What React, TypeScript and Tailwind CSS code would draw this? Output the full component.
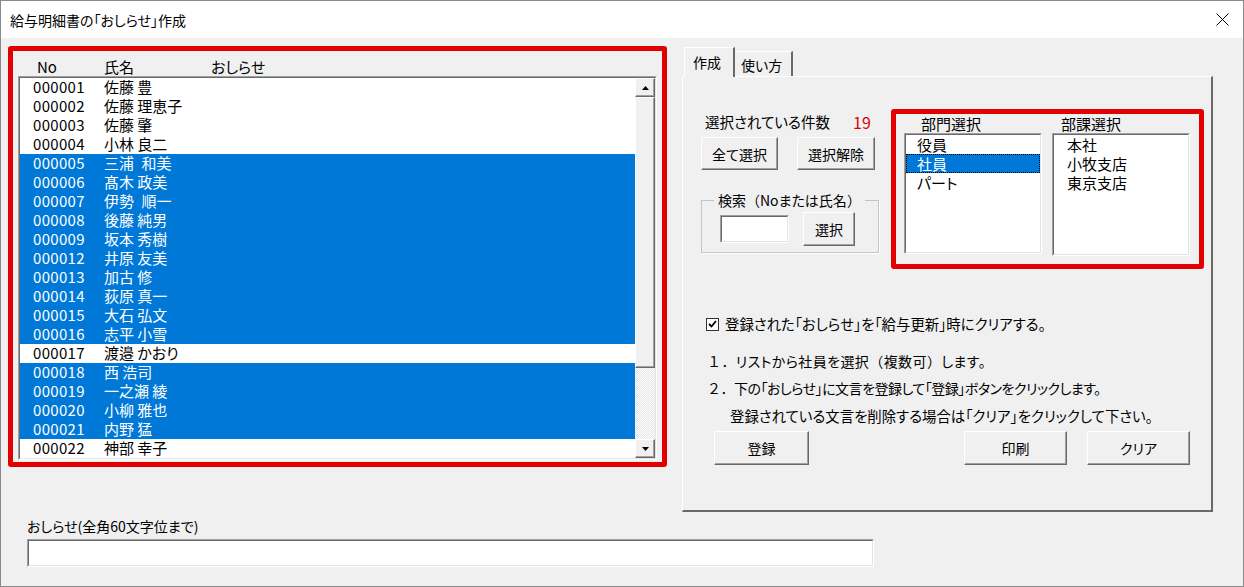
import React from 'react';

type Row = { no: string; name: string; sel: boolean };

const rows: Row[] = [
  { no: '000001', name: '佐藤 豊', sel: false },
  { no: '000002', name: '佐藤 理恵子', sel: false },
  { no: '000003', name: '佐藤 肇', sel: false },
  { no: '000004', name: '小林 良二', sel: false },
  { no: '000005', name: '三浦\u2002和美', sel: true },
  { no: '000006', name: '髙木 政美', sel: true },
  { no: '000007', name: '伊勢\u2002順一', sel: true },
  { no: '000008', name: '後藤 純男', sel: true },
  { no: '000009', name: '坂本 秀樹', sel: true },
  { no: '000012', name: '井原 友美', sel: true },
  { no: '000013', name: '加古 修', sel: true },
  { no: '000014', name: '荻原 真一', sel: true },
  { no: '000015', name: '大石 弘文', sel: true },
  { no: '000016', name: '志平 小雪', sel: true },
  { no: '000017', name: '渡邉 かおり', sel: false },
  { no: '000018', name: '西 浩司', sel: true },
  { no: '000019', name: '一之瀬 綾', sel: true },
  { no: '000020', name: '小柳 雅也', sel: true },
  { no: '000021', name: '内野 猛', sel: true },
  { no: '000022', name: '神部 幸子', sel: false },
];

// full-width glyphs that should keep their full advance
const F = ({ children }: { children: React.ReactNode }) => (
  <span className="[font-feature-settings:normal]">{children}</span>
);

// classic sunken frame (listbox / textbox)
const Sunken = ({ className, children }: { className?: string; children?: React.ReactNode }) => (
  <div className={'border border-[#a0a0a0] border-b-white border-r-white ' + (className ?? '')}>
    <div className="w-full h-full border border-[#696969] border-b-[#e3e3e3] border-r-[#e3e3e3] bg-white overflow-hidden">
      {children}
    </div>
  </div>
);

const Btn = ({ label, className }: { label: string; className?: string }) => (
  <button
    className={
      'bg-[#f0f0f0] border border-white border-r-[#696969] border-b-[#696969] shadow-[inset_-1px_-1px_#a0a0a0] text-[14px] flex items-center justify-center ' +
      (className ?? '')
    }
  >
    {label}
  </button>
);

const Arrow = ({ down }: { down?: boolean }) => (
  <div className="h-[19px] bg-[#f0f0f0] border border-white border-r-[#696969] border-b-[#696969] shadow-[inset_-1px_-1px_#a0a0a0] flex items-center justify-center">
    <svg width="7" height="4" viewBox="0 0 7 4">
      <path d={down ? 'M0 0H7L3.5 4Z' : 'M0 4H7L3.5 0Z'} fill="#000" />
    </svg>
  </div>
);

export default function App() {
  return (
    <div className="w-[1244px] h-[587px] border border-[#8a8a8a] bg-[#f0f0f0] flex flex-col text-black overflow-hidden font-['Noto_Sans_CJK_JP','Noto_Sans',sans-serif] [font-feature-settings:'palt']">
      {/* title bar */}
      <div className="h-[37px] shrink-0 bg-white flex items-center justify-between pl-[9px] pr-[14px]">
        <span className="text-[14px] leading-[20px]">給与明細書の「おしらせ」作成</span>
        <svg width="13" height="13" viewBox="0 0 13 13">
          <path d="M0.5 0.5L12.5 12.5M12.5 0.5L0.5 12.5" stroke="#000" strokeWidth="1" />
        </svg>
      </div>

      <div className="flex-1 flex flex-col pl-[7px]">
        <div className="flex items-start pt-[8px]">
          {/* employee list */}
          <div className="w-[659px] h-[421px] border-[5px] border-[#e00000] rounded-[3px] flex flex-col">
            <div className="h-[25px] flex items-end pl-[24px] text-[15px] leading-[18px]">
              <span className="w-[67px]">No</span>
              <span className="w-[107px]">氏名</span>
              <span>おしらせ</span>
            </div>
            <Sunken className="mx-[5px] h-[384px]">
              <div className="flex h-full">
                <div className="flex-1 flex flex-col">
                  {rows.map((r) => (
                    <div
                      key={r.no}
                      className={
                        'h-[19px] shrink-0 flex items-center pl-[13px] text-[15px] whitespace-pre ' +
                        (r.sel ? 'bg-[#0078d7] text-white' : '')
                      }
                    >
                      <span className="w-[71px] tracking-[0.3px]">{r.no}</span>
                      <span>{r.name}</span>
                    </div>
                  ))}
                </div>
                <div className="w-[20px] flex flex-col">
                  <Arrow />
                  <div className="h-[271px] bg-[#f0f0f0] border border-white border-r-[#696969] border-b-[#696969] shadow-[inset_-1px_-1px_#a0a0a0]" />
                  <div className="flex-1 bg-[image:repeating-conic-gradient(#ffffff_0%_25%,#e4e4e4_0%_50%)] bg-[length:2px_2px]" />
                  <Arrow down />
                </div>
              </div>
            </Sunken>
          </div>

          {/* tab control */}
          <div className="ml-[15px] mt-[1px] w-[531px] flex flex-col">
            <div className="flex items-end h-[29px] pl-[2px]">
              <div className="relative z-10 -mb-[1px] h-[30px] w-[51px] bg-[#f0f0f0] border-t border-l border-white border-r-2 border-r-[#696969] pl-[8px] pt-[4px] text-[14px] leading-[20px]">
                作成
              </div>
              <div className="h-[25px] w-[58px] bg-[#f0f0f0] border-t border-white border-r-2 border-r-[#696969] pl-[6px] pt-[3px] text-[14px] leading-[20px]">
                使い方
              </div>
            </div>
            <div className="h-[436px] border border-white border-r-2 border-b-2 border-r-[#696969] border-b-[#696969] text-[14px] leading-[20px]">
              <div className="flex items-start pt-[32px] pl-[18px]">
                <div className="w-[178px] flex flex-col">
                  <div className="mt-[3px] h-[20px] flex items-center pl-[4px]">
                    <span className="w-[148px] text-[14.5px]">選択されている件数</span>
                    <span className="text-[#e00000] text-[16px]">19</span>
                  </div>
                  <div className="mt-[5px] flex gap-[19px]">
                    <Btn label="全て選択" className="w-[77px] h-[33px]" />
                    <Btn label="選択解除" className="w-[78px] h-[33px]" />
                  </div>
                  <fieldset className="mt-[20px] h-[63px] border border-[#c4c4c4] shadow-[1px_1px_white] flex items-start">
                    <legend className="ml-[12px] px-[4px]">
                      検索<F>（</F>Noまたは氏名<F>）</F>
                    </legend>
                    <div className="flex items-center pl-[18px] mt-[2px] gap-[14px]">
                      <Sunken className="w-[69px] h-[28px]" />
                      <Btn label="選択" className="w-[52px] h-[34px]" />
                    </div>
                  </fieldset>
                </div>

                {/* department selection */}
                <div className="ml-[12px] w-[313px] h-[160px] border-[5px] border-[#e00000] rounded-[3px] flex gap-[10px] pl-[8px] text-[15px]">
                  <div className="flex flex-col">
                    <div className="h-[19px] leading-[19px] pl-[17px]">部門選択</div>
                    <Sunken className="w-[138px] h-[121px]">
                      <div className="flex flex-col">
                        <div className="h-[19px] flex items-center pl-[11px]">役員</div>
                        <div className="h-[19px] flex items-center pl-[10px] bg-[#0078d7] text-white border border-dotted border-black">社員</div>
                        <div className="h-[19px] flex items-center pl-[11px]">パート</div>
                      </div>
                    </Sunken>
                  </div>
                  <div className="flex flex-col">
                    <div className="h-[19px] leading-[19px] pl-[9px]">部課選択</div>
                    <Sunken className="w-[138px] h-[123px]">
                      <div className="flex flex-col">
                        <div className="h-[19px] flex items-center pl-[13px]">本社</div>
                        <div className="h-[19px] flex items-center pl-[13px]">小牧支店</div>
                        <div className="h-[19px] flex items-center pl-[13px]">東京支店</div>
                      </div>
                    </Sunken>
                  </div>
                </div>
              </div>

              <div className="mt-[45px] pl-[23px] flex items-center gap-[6px]">
                <div className="w-[13px] h-[13px] bg-white border border-[#333] flex items-center justify-center">
                  <svg width="9" height="8" viewBox="0 0 9 8">
                    <path d="M1 4L3.5 6.5L8 1" stroke="#000" strokeWidth="1.8" fill="none" />
                  </svg>
                </div>
                <span className="text-[14.4px]">登録された「おしらせ」を「給与更新」時にクリアする。</span>
              </div>

              <div className="mt-[14px] pl-[24px] leading-[27px]">
                <div className="tracking-[0.4px]">
                  <F>１．</F>リストから社員を選択<F>（</F>複数可<F>）</F>します。
                </div>
                <div className="tracking-[-0.5px]">
                  <F>２．</F>下の「おしらせ」に文言を登録して「登録」ボタンをクリックします。
                </div>
                <div className="pl-[23px] text-[14.4px]">登録されている文言を削除する場合は「クリア」をクリックして下さい。</div>
              </div>

              <div className="mt-[2px] flex pl-[31px]">
                <Btn label="登録" className="w-[95px] h-[34px]" />
                <Btn label="印刷" className="ml-[155px] w-[103px] h-[34px]" />
                <Btn label="クリア" className="ml-[20px] w-[103px] h-[34px]" />
              </div>
            </div>
          </div>
        </div>

        {/* message input */}
        <div className="pl-[19px] mt-[4px] flex flex-col">
          <div className="text-[14px] leading-[20px]">おしらせ(全角60文字位まで)</div>
          <Sunken className="mt-[3px] w-[847px] h-[28px]" />
        </div>
      </div>
    </div>
  );
}
